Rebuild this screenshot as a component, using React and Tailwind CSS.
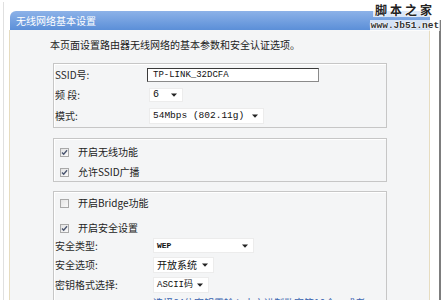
import React from "react";

const cjk = { fontFamily: '"Noto Sans CJK SC", "Noto Sans", sans-serif' };
const mono = { fontFamily: '"Liberation Mono", "Noto Sans CJK SC", monospace' };

function Arrow() {
  return (
    <svg width="6" height="4" viewBox="0 0 6 4" className="shrink-0">
      <path d="M0 0.5h6L3 3.8z" fill="#222" />
    </svg>
  );
}

function Select({ w, h, text, textStyle, textClass }) {
  return (
    <div className={`flex items-center bg-white border border-[#ececec] pl-[3px] pr-[5px] justify-between ${w} ${h}`}>
      <span className={textClass} style={textStyle}>
        {text}
      </span>
      <Arrow />
    </div>
  );
}

function Check({ checked }) {
  return (
    <div className="w-[9px] h-[9px] border border-[#a9a9a9] bg-gradient-to-br from-[#e4e4e4] to-[#fafafa] flex items-center justify-center shrink-0">
      {checked && (
        <svg width="7" height="7" viewBox="0 0 7 7">
          <path d="M1 3.4l1.7 1.8L6 1.2" stroke="#4b5670" strokeWidth="1.4" fill="none" />
        </svg>
      )}
    </div>
  );
}

function Label({ children }) {
  return (
    <div className="w-[92px] shrink-0 text-[10px] text-[#2a2a2a] leading-none" style={cjk}>
      {children}
    </div>
  );
}

export default function App() {
  return (
    <div className="w-[442px] h-[300px] relative overflow-hidden bg-white flex">
      <div className="w-[3px] shrink-0" />
      <div className="w-px shrink-0 bg-[#e0e0e0] mt-[2px]" />
      <div className="w-[5px] shrink-0" />

      <div className="w-[421px] shrink-0 flex flex-col pt-[11px] min-h-0">
        <div className="h-[19px] shrink-0 ml-px rounded-tl-[6px] bg-gradient-to-b from-[#8db2e8] to-[#5b8fd8] flex items-center pl-[6px]">
          <span className="text-[10px] text-white leading-none" style={cjk}>
            无线网络基本设置
          </span>
        </div>

        <div className="flex-1 min-h-0 border-l border-r border-[#e6dcc0] bg-[#f4f5f6] flex flex-col">
          <div className="shrink-0 pl-[40px] pt-[8px] h-[14px] box-content text-[10px] text-[#222] leading-[14px]" style={cjk}>
            本页面设置路由器无线网络的基本参数和安全认证选项。
          </div>

          <div className="shrink-0 ml-[43px] mt-[11px] w-[334px] border border-[#c6c6c6] shadow-[inset_1px_1px_0_#fff] pl-px pt-[4px] pb-[3px] flex flex-col gap-[6px]">
            <div className="flex items-center h-[14px]">
              <Label>SSID号:</Label>
              <div className="w-[172px] h-[14px] bg-white border border-[#8a8a8a] border-t-[#3a3a3a] border-l-[#3a3a3a] flex items-center pl-[5px]">
                <span className="text-[9px] text-[#111] leading-none" style={mono}>
                  TP-LINK_32DCFA
                </span>
              </div>
            </div>
            <div className="flex items-center h-[14px]">
              <Label>频 段:</Label>
              <div className="ml-[2px]">
                <Select w="w-[34px]" h="h-[14px]" text="6" textClass="text-[10px] text-[#111] leading-none" textStyle={mono} />
              </div>
            </div>
            <div className="flex items-center h-[16px]">
              <Label>模式:</Label>
              <div className="ml-[2px]">
                <Select w="w-[115px]" h="h-[16px]" text="54Mbps (802.11g)" textClass="text-[9.5px] text-[#111] leading-none" textStyle={mono} />
              </div>
            </div>
          </div>

          <div className="shrink-0 ml-[43px] mt-[10px] w-[334px] border border-[#c6c6c6] shadow-[inset_1px_1px_0_#fff] pl-[6px] pt-[5px] pb-px flex flex-col gap-[4px]">
            <div className="flex items-center h-[16px] gap-[9px]">
              <Check checked />
              <span className="text-[10px] text-[#222] leading-none" style={cjk}>开启无线功能</span>
            </div>
            <div className="flex items-center h-[16px] gap-[9px]">
              <Check checked />
              <span className="text-[10px] text-[#222] leading-none" style={cjk}>允许SSID广播</span>
            </div>
          </div>

          <div className="shrink-0 ml-[43px] mt-[9px] w-[334px] h-[120px] border border-[#c6c6c6] border-b-0 shadow-[inset_1px_1px_0_#fff] pl-px pt-[3px] flex flex-col">
            <div className="shrink-0 flex items-center h-[16px] gap-[9px] pl-[5px]">
              <Check />
              <span className="text-[10px] text-[#222] leading-none" style={cjk}>开启Bridge功能</span>
            </div>
            <div className="shrink-0 flex items-center h-[16px] gap-[9px] pl-[5px] mt-[9px]">
              <Check checked />
              <span className="text-[10px] text-[#222] leading-none" style={cjk}>开启安全设置</span>
            </div>
            <div className="shrink-0 flex items-center h-[15px] mt-[2px]">
              <Label>安全类型:</Label>
              <div className="ml-[6px]">
                <Select w="w-[101px]" h="h-[15px]" text="WEP" textClass="text-[8px] font-bold text-[#111] leading-none" textStyle={mono} />
              </div>
            </div>
            <div className="shrink-0 flex items-center h-[16px] mt-[4px]">
              <Label>安全选项:</Label>
              <div className="ml-[6px]">
                <Select w="w-[61px]" h="h-[16px]" text="开放系统" textClass="text-[10px] text-[#111] leading-none" textStyle={cjk} />
              </div>
            </div>
            <div className="shrink-0 flex items-center h-[16px] mt-[4px]">
              <Label>密钥格式选择:</Label>
              <div className="ml-[6px]">
                <Select w="w-[56px]" h="h-[16px]" text="ASCII码" textClass="text-[9px] text-[#111] leading-none" textStyle={mono} />
              </div>
            </div>
            <div className="shrink-0 pl-[98px] mt-[5px] text-[10px] text-[#3b64b0] leading-none whitespace-nowrap" style={cjk}>
              选择64位密钥需输入十六进制数字符10个，或者
            </div>
          </div>
        </div>
      </div>

      <div className="w-[9px] shrink-0" />
      <div className="w-[2px] shrink-0 bg-[#7d7d7d] mt-[20px]" />

      <div
        className="absolute top-[3px] right-[5px] w-[64px] flex flex-col items-center"
        style={{ textShadow: "0 0 2px #fff, 0 0 2px #fff, 0 0 1px #fff" }}
      >
        <div className="px-[2px] bg-white/70 text-[12px] leading-[14px] text-[#222] tracking-[3px] font-bold" style={{ fontFamily: '"Noto Sans CJK SC", serif' }}>
          脚本之家
        </div>
        <div className="mt-[3px] px-[1px] bg-white/70 text-[9.5px] leading-[11px] text-[#333] font-bold" style={mono}>
          www.Jb51.net
        </div>
      </div>
    </div>
  );
}
